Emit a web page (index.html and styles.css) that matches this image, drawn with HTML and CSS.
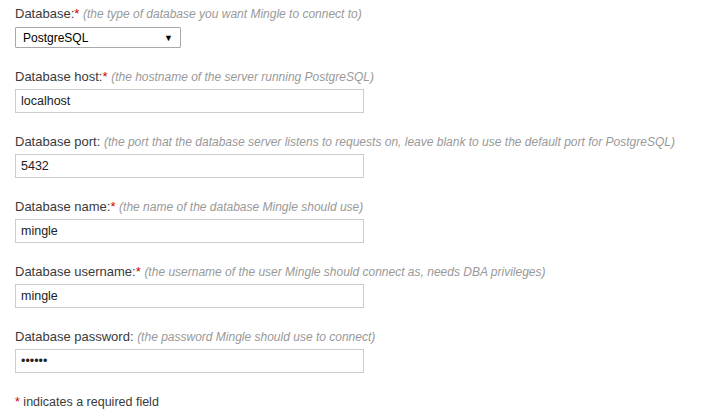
FILE: index.html
```html
<!DOCTYPE html>
<html lang="en">
<head>
  <meta charset="UTF-8" />
  <title>Database Configuration</title>
  <link rel="stylesheet" href="styles.css">
</head>
<body>
  <form class="db-form">
    <div class="field">
      <label for="db_type">Database:<span class="req">*</span> <em class="hint">(the type of database you want Mingle to connect to)</em></label>
      <div class="select-box">
        <span>PostgreSQL</span>
        <span class="arrow">&#9660;</span>
      </div>
    </div>

    <div class="field">
      <label for="db_host">Database host:<span class="req">*</span> <em class="hint">(the hostname of the server running PostgreSQL)</em></label>
      <input type="text" id="db_host" value="localhost" />
    </div>

    <div class="field">
      <label for="db_port">Database port: <em class="hint">(the port that the database server listens to requests on, leave blank to use the default port for PostgreSQL)</em></label>
      <input type="text" id="db_port" value="5432" />
    </div>

    <div class="field">
      <label for="db_name">Database name:<span class="req">*</span> <em class="hint">(the name of the database Mingle should use)</em></label>
      <input type="text" id="db_name" value="mingle" />
    </div>

    <div class="field">
      <label for="db_user">Database username:<span class="req">*</span> <em class="hint">(the username of the user Mingle should connect as, needs DBA privileges)</em></label>
      <input type="text" id="db_user" value="mingle" />
    </div>

    <div class="field">
      <label for="db_pass">Database password: <em class="hint">(the password Mingle should use to connect)</em></label>
      <input type="password" id="db_pass" value="secret" />
    </div>

    <p class="note"><span class="req">*</span> indicates a required field</p>
  </form>
</body>
</html>
```

FILE: styles.css
```css
* {
  box-sizing: border-box;
}

body {
  margin: 0;
  padding: 5px 15px 0;
  background: #fff;
  font-family: 'Liberation Sans', Arial, sans-serif;
  font-size: 13px;
  color: #3a3a3a;
}

.field {
  margin-bottom: 20px;
}

.field label {
  display: block;
  line-height: 18px;
  margin-bottom: 3px;
}

.req {
  color: #c00;
}

.hint {
  color: #999;
  font-size: 12px;
}

.select-box {
  display: flex;
  align-items: center;
  justify-content: space-between;
  width: 166px;
  height: 21px;
  margin-top: 4px;
  padding: 0 7px 0 7px;
  border: 1px solid #a9a9a9;
  border-radius: 1px;
  color: #000;
  font-size: 12px;
}

.select-box .arrow {
  font-size: 9px;
}

.field input {
  display: block;
  width: 349px;
  height: 24px;
  margin: 0;
  padding: 0 5px;
  border: 1px solid #ccc;
  font-family: inherit;
  font-size: 12.5px;
  color: #222;
}

.note {
  margin: 0;
  line-height: 18px;
  font-size: 12.5px;
}
```
